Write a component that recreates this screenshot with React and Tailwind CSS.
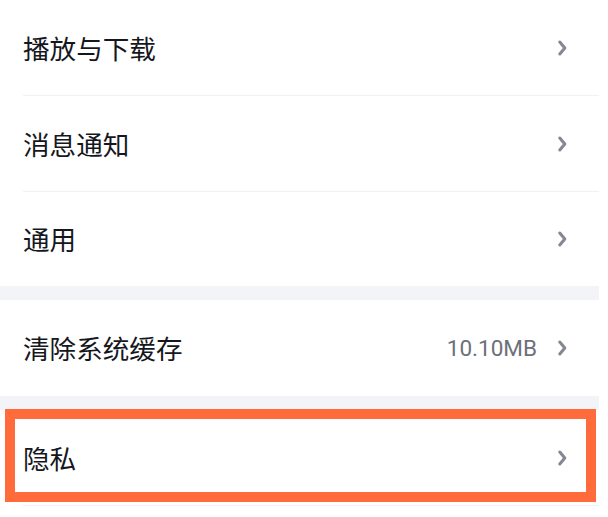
const rows = [
  { label: '播放与下载', h: 'h-[96px]', line: true },
  { label: '消息通知', h: 'h-[96px]', line: true },
  { label: '通用', h: 'h-[94px]', line: false },
];

function Chevron() {
  return (
    <svg width="10" height="16" viewBox="0 0 10 16" className="shrink-0">
      <path d="M2.8 2 L7.8 8 L2.8 14" fill="none" stroke="#858892" strokeWidth="3" strokeLinecap="round" strokeLinejoin="round" />
    </svg>
  );
}

function Row({ label, value, className = '', line }) {
  return (
    <div className={`relative flex items-center bg-white pl-[23px] pr-[32px] ${className}`}>
      <span className="flex-1 text-[26.6px] leading-none text-[#16171d]">{label}</span>
      {value && (
        <span className="mr-[20px] text-[22.5px] leading-none text-[#6d707a]" style={{ fontFamily: 'Roboto, "Noto Sans", sans-serif' }}>
          {value}
        </span>
      )}
      <Chevron />
      {line && <div className="absolute bottom-0 left-[23px] right-0 h-px bg-[#f0f1f4]" />}
    </div>
  );
}

export default function App() {
  return (
    <div className="h-[517px] w-[608px] bg-white" style={{ fontFamily: '"Noto Sans CJK SC", "Noto Sans", sans-serif' }}>
      <div className="w-[599px]">
        {rows.map((r) => (
          <Row key={r.label} label={r.label} className={r.h} line={r.line} />
        ))}
        <div className="h-[14px] bg-[#f2f4f8]" />
        <Row label="清除系统缓存" value="10.10MB" className="h-[96px]" />
        <div className="h-[14px] bg-[#f2f4f8]" />
        <div className="relative">
          <Row label="隐私" className="h-[96px]" line />
          {/* highlight box */}
          <div className="absolute left-[5px] right-[3px] top-[-1px] h-[93px] border-[10px] border-[#ff6b3b]" />
        </div>
      </div>
    </div>
  );
}
